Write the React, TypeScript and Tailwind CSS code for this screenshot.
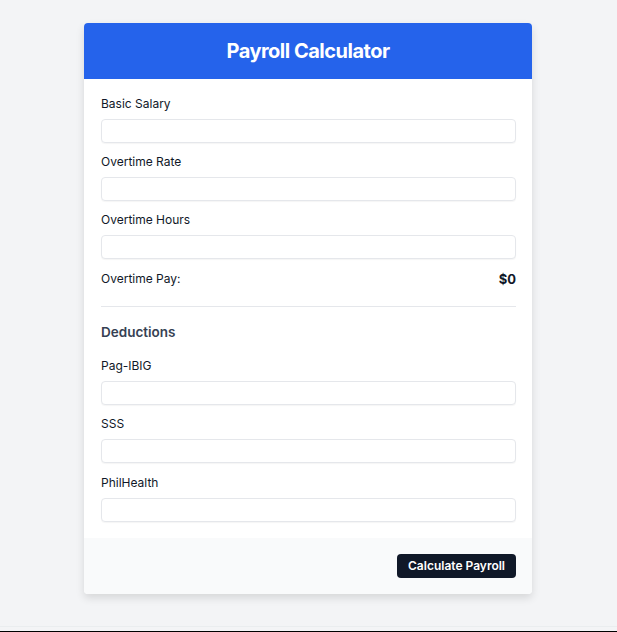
import React from "react";

function Field({ label }: { label: string }) {
  return (
    <div className="flex flex-col">
      <label className="text-xs leading-5 text-gray-900 mb-[5px]">{label}</label>
      <input className="h-6 w-full rounded border border-gray-200 bg-white shadow-[0_1px_1px_rgba(0,0,0,0.04)] outline-none" />
    </div>
  );
}

export default function App() {
  return (
    <div
      className="min-h-[632px] bg-[#f3f4f6] pt-[23px] flex flex-col"
      style={{ fontFamily: "Inter, 'Noto Sans', sans-serif" }}
    >
      <div className="ml-[84px] w-[448px] bg-white rounded shadow-[0_4px_8px_rgba(0,0,0,0.12)] overflow-hidden">
        <div className="h-14 bg-[#2563eb] flex items-center justify-center">
          <h1 className="text-xl font-bold tracking-tight text-white">Payroll Calculator</h1>
        </div>
        <div className="pl-[17px] pr-4 pt-[15px] pb-4 flex flex-col gap-[9px]">
          <Field label="Basic Salary" />
          <Field label="Overtime Rate" />
          <Field label="Overtime Hours" />
          <div className="flex justify-between items-center text-xs leading-5 mt-[1px]">
            <span className="text-gray-900">Overtime Pay:</span>
            <span className="font-bold text-[13px] text-gray-900">$0</span>
          </div>
          <div className="border-t border-gray-200 mt-[8px]" />
          <h2 className="text-[13.5px] font-semibold text-gray-700 mt-[6px] mb-[5px]">Deductions</h2>
          <Field label="Pag-IBIG" />
          <Field label="SSS" />
          <div className="mt-px">
            <Field label="PhilHealth" />
          </div>
        </div>
        <div className="h-14 bg-gray-50 px-4 flex items-center justify-end">
          <button className="h-6 px-[11px] rounded bg-gray-900 text-white text-xs font-semibold">
            Calculate Payroll
          </button>
        </div>
      </div>
      <div className="flex-1" />
      <div className="w-full h-px bg-gray-200/60 mb-[4px]" />
      <div className="w-full h-px bg-black" />
    </div>
  );
}
